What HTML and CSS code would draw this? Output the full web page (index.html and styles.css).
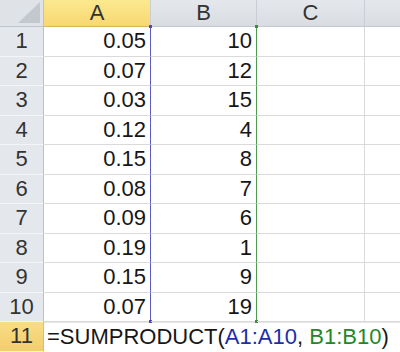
FILE: index.html
```html
<!DOCTYPE html>
<html lang="en">
<head>
  <meta charset="UTF-8" />
  <title>SUMPRODUCT</title>
  <link rel="stylesheet" href="styles.css">
</head>
<body>
  <div class="sheet">
    <div class="corner"><span class="tri"></span></div>
    <div class="colhead active">A</div>
    <div class="colhead">B</div>
    <div class="colhead">C</div>
    <div class="colhead last"></div>

    <div class="rowhead">1</div><div class="cell ra"><i class="h h-tr blue"></i>0.05</div><div class="cell rb"><i class="h h-tr green"></i>10</div><div class="cell"></div><div class="cell last"></div>
    <div class="rowhead">2</div><div class="cell ra">0.07</div><div class="cell rb">12</div><div class="cell"></div><div class="cell last"></div>
    <div class="rowhead">3</div><div class="cell ra">0.03</div><div class="cell rb">15</div><div class="cell"></div><div class="cell last"></div>
    <div class="rowhead">4</div><div class="cell ra">0.12</div><div class="cell rb">4</div><div class="cell"></div><div class="cell last"></div>
    <div class="rowhead">5</div><div class="cell ra">0.15</div><div class="cell rb">8</div><div class="cell"></div><div class="cell last"></div>
    <div class="rowhead">6</div><div class="cell ra">0.08</div><div class="cell rb">7</div><div class="cell"></div><div class="cell last"></div>
    <div class="rowhead">7</div><div class="cell ra">0.09</div><div class="cell rb">6</div><div class="cell"></div><div class="cell last"></div>
    <div class="rowhead">8</div><div class="cell ra">0.19</div><div class="cell rb">1</div><div class="cell"></div><div class="cell last"></div>
    <div class="rowhead">9</div><div class="cell ra">0.15</div><div class="cell rb">9</div><div class="cell"></div><div class="cell last"></div>
    <div class="rowhead">10</div><div class="cell ra"><i class="h h-br blue"></i>0.07</div><div class="cell rb"><i class="h h-br green"></i>19</div><div class="cell"></div><div class="cell last"></div>

    <div class="rowhead active">11</div>
    <div class="formula"><span>=SUMPRODUCT(<span class="ref-a">A1:A10</span>, <span class="ref-b">B1:B10</span>)</span></div>
  </div>
</body>
</html>
```

FILE: styles.css
```css
body {
  margin: 0;
  background: #ffffff;
  font-family: "Liberation Sans", Arial, sans-serif;
  overflow: hidden;
}

.sheet {
  display: grid;
  grid-template-columns: 44px 107px 106px 108px 1fr;
  grid-template-rows: 27px repeat(11, 29.5px);
  width: 400px;
  height: 352px;
  font-size: 22px;
  color: #161616;
}

.sheet > div {
  box-sizing: border-box;
}

.corner {
  position: relative;
  background: #dfe3e8;
  border-right: 1px solid #bcc3cb;
  border-bottom: 1px solid #bcc3cb;
}

.tri {
  position: absolute;
  right: 3px;
  bottom: 3px;
  width: 0;
  height: 0;
  border-left: 22px solid transparent;
  border-bottom: 21px solid #c3c8cf;
}

.colhead {
  display: flex;
  align-items: center;
  justify-content: center;
  background: linear-gradient(#e4e7eb, #d9dde2);
  border-right: 1px solid #c9ced5;
  border-bottom: 1px solid #c2c8cf;
  color: #333;
}

.colhead.active {
  background: linear-gradient(#fce98f, #f8d772);
  border-bottom-color: #d8b55a;
}

.colhead.last,
.cell.last {
  border-right: none;
}

.rowhead {
  display: flex;
  align-items: center;
  justify-content: center;
  background: #e4e7eb;
  border-right: 1px solid #b8bfc7;
  border-bottom: 1px solid #f3f4f6;
  color: #333;
}

.rowhead.active {
  background: linear-gradient(#f8dd86, #f3cd6c);
}

.cell {
  position: relative;
  display: flex;
  align-items: center;
  justify-content: flex-end;
  padding-right: 4px;
  border-right: 1px solid #dadada;
  border-bottom: 1px solid #dadada;
}

.cell.ra {
  border-right-color: #5c5cc0;
}

.cell.rb {
  border-right-color: #4f9a4f;
}

.h {
  position: absolute;
  right: -2px;
  width: 3px;
  height: 3px;
}

.h-tr {
  top: -2px;
}

.h-br {
  bottom: -2px;
}

.h.blue {
  background: #4a4ab8;
}

.h.green {
  background: #3d8d3d;
}

.formula {
  grid-column: 2 / 6;
  display: flex;
  align-items: center;
  padding-left: 3px;
  white-space: nowrap;
  background: #ffffff;
  border-top: 1px solid #e6e6e6;
  color: #161616;
}

.ref-a {
  color: #1c2ea8;
}

.ref-b {
  color: #1d8a24;
}
```
